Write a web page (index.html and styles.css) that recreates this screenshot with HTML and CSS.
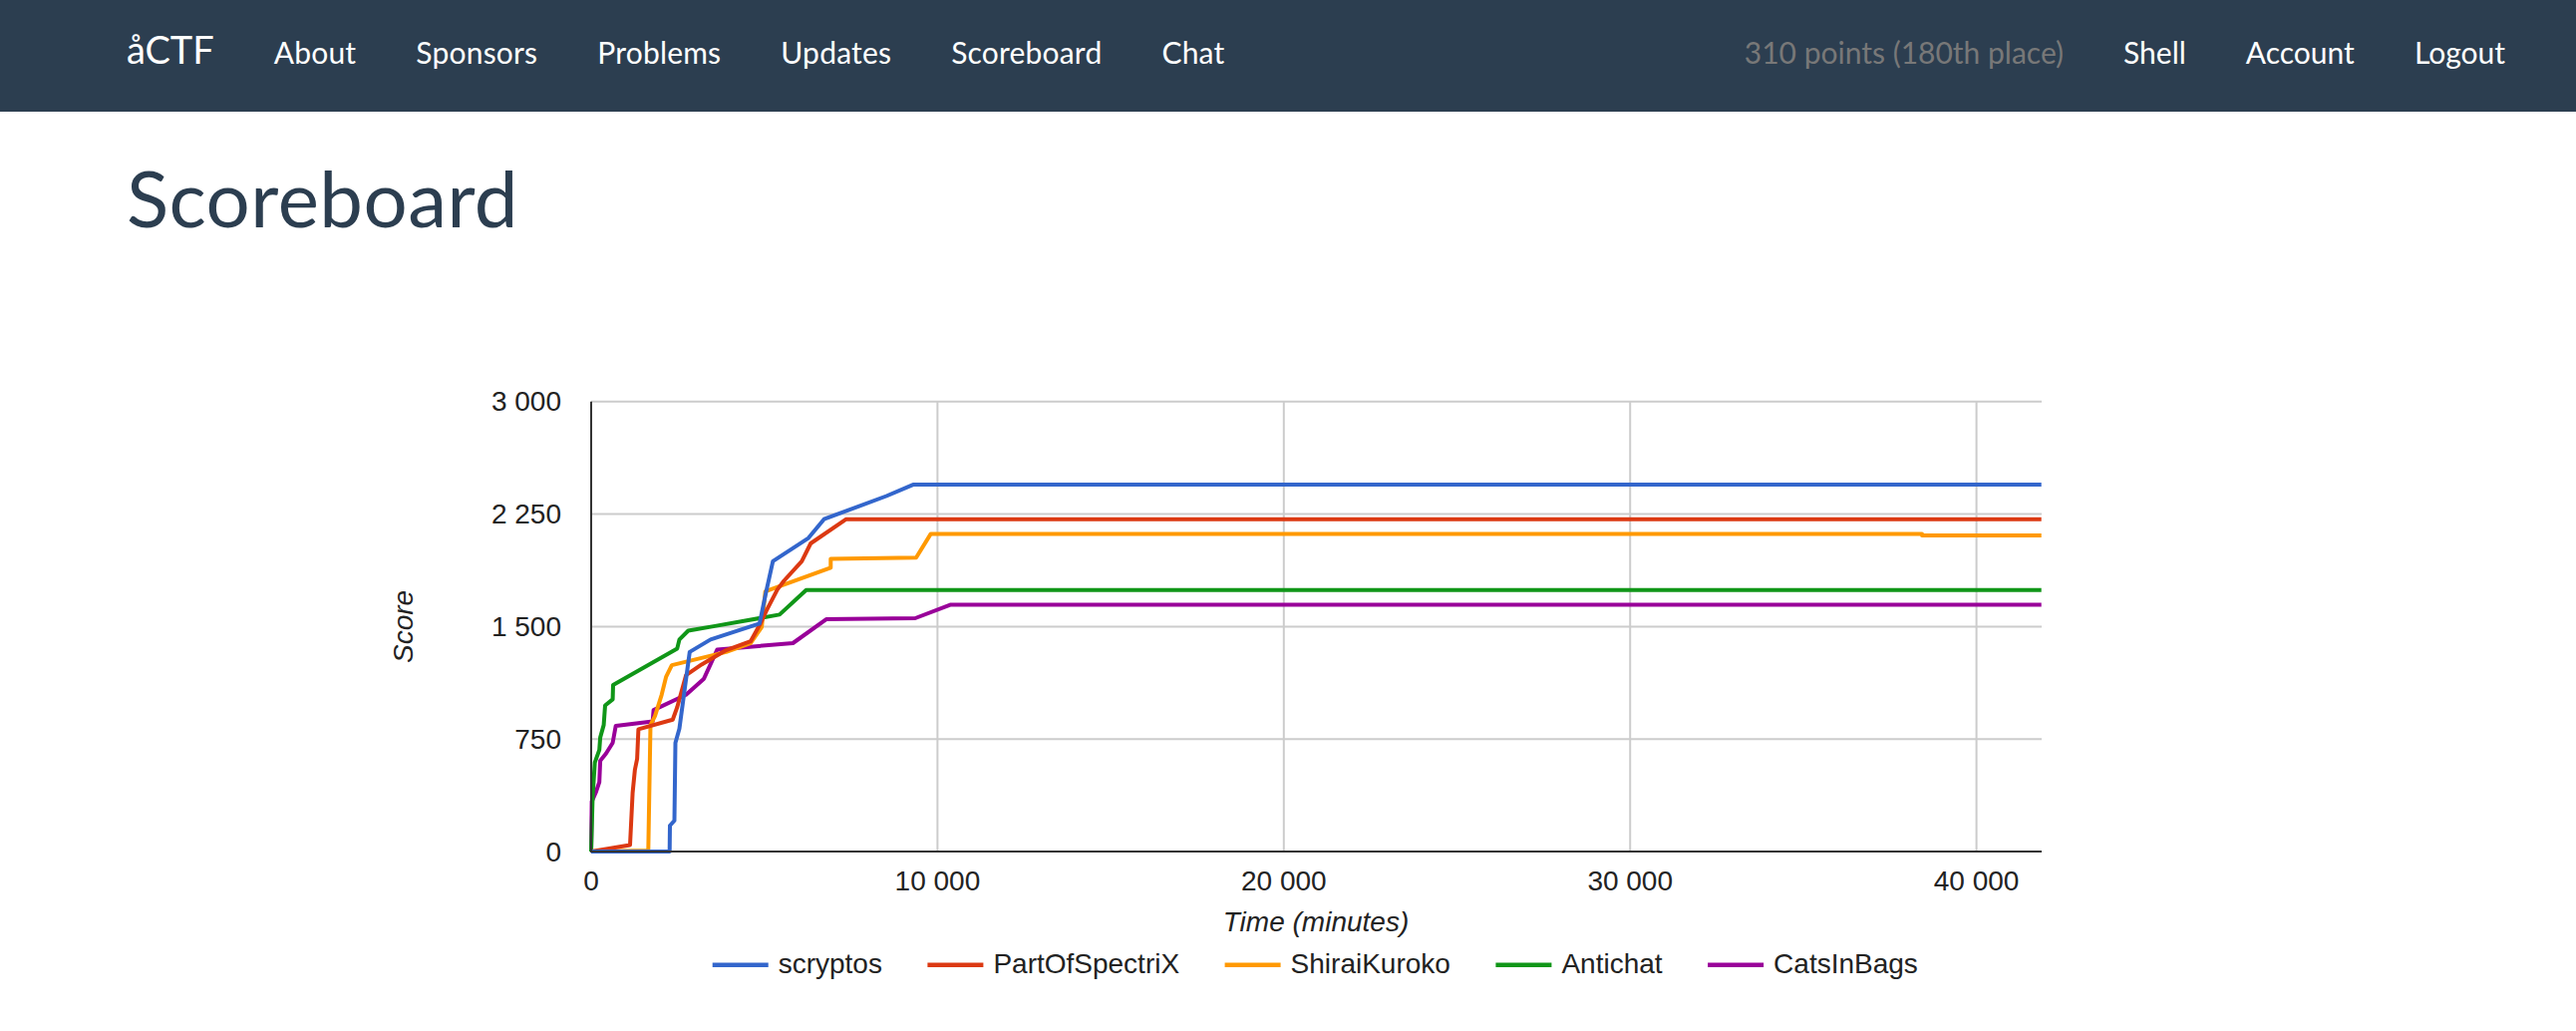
FILE: index.html
```html
<!DOCTYPE html>
<html lang="en">
<head>
<meta charset="utf-8">
<title>Scoreboard - åCTF</title>
<link rel="stylesheet" href="styles.css">
</head>
<body>
<nav class="navbar">
  <div class="nav-inner">
    <a class="brand" href="#">åCTF</a>
    <ul class="nav nav-main">
      <li><a href="#">About</a></li>
      <li><a href="#">Sponsors</a></li>
      <li><a href="#">Problems</a></li>
      <li><a href="#">Updates</a></li>
      <li><a href="#">Scoreboard</a></li>
      <li><a href="#">Chat</a></li>
    </ul>
    <div class="nav-right">
      <span class="navbar-text">310 points (180th place)</span>
      <ul class="nav">
        <li><a href="#">Shell</a></li>
        <li><a href="#">Account</a></li>
        <li><a href="#">Logout</a></li>
      </ul>
    </div>
  </div>
</nav>
<main class="content">
  <h1 class="page-title">Scoreboard</h1>
  <div class="chart">
    <svg class="chart-svg" width="1900" height="640" viewBox="0 0 1900 640" xmlns="http://www.w3.org/2000/svg">
      <g class="grid">
        <line x1="233" y1="42.7" x2="1688" y2="42.7"/>
        <line x1="233" y1="155.5" x2="1688" y2="155.5"/>
        <line x1="233" y1="268.4" x2="1688" y2="268.4"/>
        <line x1="233" y1="381.2" x2="1688" y2="381.2"/>
        <line x1="580.4" y1="42.7" x2="580.4" y2="494"/>
        <line x1="927.8" y1="42.7" x2="927.8" y2="494"/>
        <line x1="1275.2" y1="42.7" x2="1275.2" y2="494"/>
        <line x1="1622.6" y1="42.7" x2="1622.6" y2="494"/>
      </g>
      <g class="series">
        <polyline class="s-purple" points="233,494 233.6,443.9 237.6,435 241.2,424.3 242.1,402.9 247.9,395.7 254.6,385 257.7,367.9 294.7,363.6 295.6,352.1 328.2,336.8 346.1,320.7 359.5,291.4 435.4,285 468.8,261.1 558.1,260 593.8,246.4 1687.7,246.4"/>
        <polyline class="s-green" points="233,494 234.5,438.6 236.7,404.6 241.2,392.1 242.1,379.6 245.6,367.1 247,347.5 254.6,341.4 255,327.1 319.3,290.4 321.5,281.4 330.4,272.5 357.2,267.9 422,256.4 448.7,231.8 1687.7,231.8"/>
        <polyline class="s-orange" points="233,494 290.3,492.9 292.5,367.1 297,358.2 303.7,336.8 308.1,318.9 313.9,307.1 368.4,293.9 392.9,285 404.1,268.9 407.7,233.2 473.3,209.3 473.3,200.4 559,199.3 573.7,175.4 1568,175.4 1568,177 1687.7,177"/>
        <polyline class="s-red" points="233,494 272,487.5 274.6,435 276.9,411.8 279.1,401.1 280.4,371.4 314.8,361.8 319.3,349.3 328.2,317.1 343.8,306.4 368.4,292.1 392.9,283.2 401.9,267.1 408.6,252.9 419.7,231.4 426.4,222.5 444.3,202.9 453.2,185 488.9,160.7 1687.7,160.7"/>
        <polyline class="s-blue" points="233,494 311.7,494 312,468 316.5,463 317.5,385 321.5,370.7 331.8,293.9 352.8,281.4 401.9,265.4 408.6,233.2 415.3,202.9 451,179.6 466.6,160.7 529.1,137.5 555.9,126.1 1687.7,126.1"/>
      </g>
      <g class="axes">
        <line x1="233" y1="42.7" x2="233" y2="494"/>
        <line x1="232" y1="494" x2="1688" y2="494"/>
      </g>
      <g class="labels y-labels">
        <text x="203" y="52.2">3 000</text>
        <text x="203" y="165">2 250</text>
        <text x="203" y="277.9">1 500</text>
        <text x="203" y="390.7">750</text>
        <text x="203" y="503.5">0</text>
      </g>
      <g class="labels x-labels">
        <text x="233" y="533">0</text>
        <text x="580.4" y="533">10 000</text>
        <text x="927.8" y="533">20 000</text>
        <text x="1275.2" y="533">30 000</text>
        <text x="1622.6" y="533">40 000</text>
      </g>
      <text class="axis-title" x="960" y="574">Time (minutes)</text>
      <text class="axis-title" transform="translate(53.5,268.4) rotate(-90)">Score</text>
      <g class="legend">
        <line class="s-blue" x1="354.7" y1="607.7" x2="410.7" y2="607.7"/>
        <text x="420.7" y="615.7">scryptos</text>
        <line class="s-red" x1="570.4" y1="607.7" x2="626.4" y2="607.7"/>
        <text x="636.4" y="615.7">PartOfSpectriX</text>
        <line class="s-orange" x1="868.6" y1="607.7" x2="924.6" y2="607.7"/>
        <text x="934.6" y="615.7">ShiraiKuroko</text>
        <line class="s-green" x1="1140.4" y1="607.7" x2="1196.4" y2="607.7"/>
        <text x="1206.4" y="615.7">Antichat</text>
        <line class="s-purple" x1="1353.1" y1="607.7" x2="1409.1" y2="607.7"/>
        <text x="1419.1" y="615.7">CatsInBags</text>
      </g>
    </svg>
  </div>
</main>
</body>
</html>
```

FILE: styles.css
```css
* {
  box-sizing: border-box;
}

html, body {
  margin: 0;
  padding: 0;
  background: #ffffff;
}

body {
  font-family: Lato, "Open Sans", "Liberation Sans", sans-serif;
  color: #2c3e50;
}

.navbar {
  background: #2c3e50;
  height: 112px;
}

.nav-inner {
  display: flex;
  align-items: baseline;
  height: 112px;
  padding: 29px 41px 0 97px;
}

.brand {
  font-size: 38px;
  line-height: 40px;
  padding: 0 30px;
  color: #ffffff;
  text-decoration: none;
}

.nav {
  display: flex;
  align-items: baseline;
  list-style: none;
  margin: 0;
  padding: 0;
}

.nav a {
  display: block;
  font-size: 30px;
  line-height: 40px;
  padding: 0 30px;
  color: #ffffff;
  text-decoration: none;
}

.nav-main a {
  letter-spacing: 0.2px;
}

.nav-right {
  display: flex;
  align-items: baseline;
  margin-left: auto;
}

.navbar-text {
  font-size: 30px;
  line-height: 40px;
  margin: 0 30px;
  color: #787878;
}

.content {
  padding: 0 41px 0 127px;
}

.page-title {
  margin: 43px 0 0;
  font-size: 78px;
  line-height: 86px;
  font-weight: 400;
  letter-spacing: 0.5px;
  color: #2c3e50;
}

.chart {
  margin: 119px 0 0 233px;
}

.chart-svg {
  display: block;
  font-family: "Liberation Sans", Arial, sans-serif;
}

.grid line {
  stroke: #cccccc;
  stroke-width: 2;
}

.axes line {
  stroke: #333333;
  stroke-width: 2;
}

.series polyline {
  fill: none;
  stroke-width: 4;
  stroke-linejoin: round;
}

.legend line {
  stroke-width: 4.5;
}

.s-blue { stroke: #3366cc; }
.s-red { stroke: #dc3912; }
.s-orange { stroke: #ff9900; }
.s-green { stroke: #109618; }
.s-purple { stroke: #990099; }

.labels text,
.legend text,
.axis-title {
  font-size: 28px;
  fill: #222222;
}

.y-labels text {
  text-anchor: end;
}

.x-labels text {
  text-anchor: middle;
}

.axis-title {
  font-style: italic;
  text-anchor: middle;
}
```
